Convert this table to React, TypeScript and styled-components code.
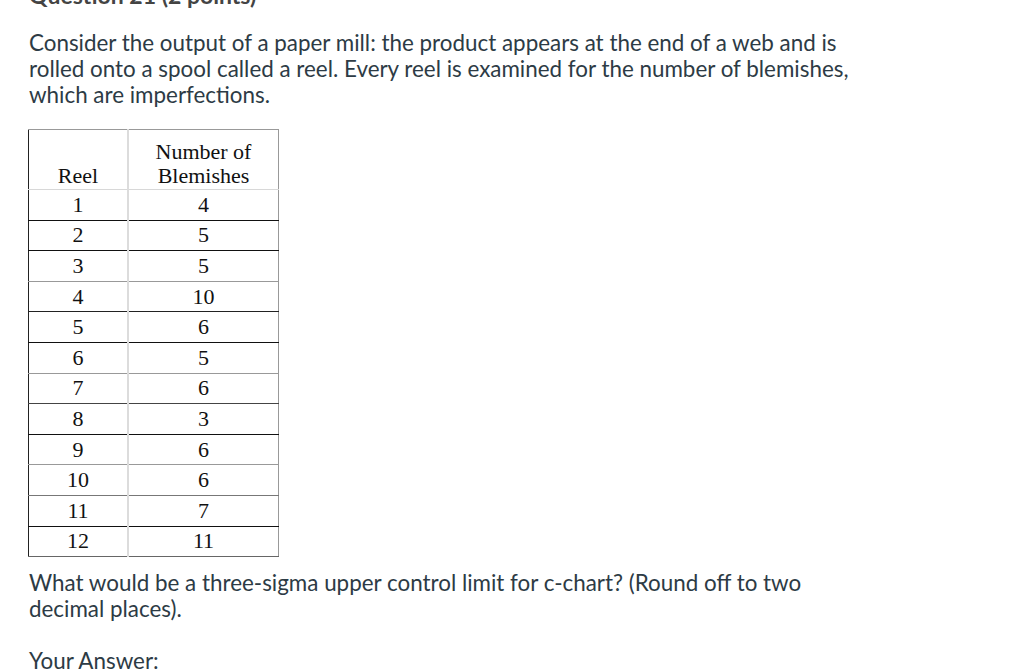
import React from "react";
import styled, { createGlobalStyle } from "styled-components";

const GlobalStyle = createGlobalStyle`
  html, body {
    margin: 0;
    padding: 0;
    background: #ffffff;
  }
  body {
    font-family: Lato, "Open Sans", sans-serif;
    color: #2d3b45;
    overflow: hidden;
  }
`;

const Page = styled.div`
  width: 1024px;
  height: 671px;
  overflow: hidden;
  padding-left: 29px;
  box-sizing: border-box;
`;

const Heading = styled.h2`
  margin: -17px 0 0 0;
  font-size: 23px;
  line-height: 24px;
  font-weight: 700;
  color: #444;
`;

const Text = styled.p`
  margin: 0;
  font-size: 22.4px;
  line-height: 26px;
  color: #2d3b45;
`;

const Intro = styled(Text)`
  margin-top: 23px;
  width: 860px;
`;

const Question = styled(Text)`
  margin-top: 13px;
  width: 800px;
`;

const Answer = styled(Text)`
  margin-top: 26px;
`;

const Table = styled.table`
  margin: 21px 0 0 -1px;
  border-collapse: collapse;
  font-family: "Liberation Serif", "Times New Roman", serif;
  font-size: 22px;
  color: #111;
  border-top: 1px solid #999;
  border-left: 1px solid #222;
  border-right: 1px solid #999;
`;

const HeadCell = styled.th`
  font-weight: 400;
  height: 58px;
  padding: 0 0 1px 0;
  vertical-align: bottom;
  line-height: 24px;
  border-bottom: 1px solid #d8d8d8;
  text-align: center;
`;

const HeadFirst = styled(HeadCell)`
  width: 98px;
  border-right: 2px solid #dcdcdc;
`;

const Row = styled.tr<{ $line: string }>`
  height: 30.6px;
  border-bottom: 1px solid ${p => p.$line};
`;

const Cell = styled.td<{ $first?: boolean }>`
  padding: 0;
  text-align: center;
  line-height: 24px;
  width: ${p => (p.$first ? "98px" : "149px")};
  border-right: ${p => (p.$first ? "2px solid #dcdcdc" : "none")};
`;

const rows: [number, number, string][] = [
  [1, 4, "#111"],
  [2, 5, "#111"],
  [3, 5, "#999"],
  [4, 10, "#222"],
  [5, 6, "#111"],
  [6, 5, "#999"],
  [7, 6, "#444"],
  [8, 3, "#111"],
  [9, 6, "#999"],
  [10, 6, "#777"],
  [11, 7, "#111"],
  [12, 11, "#666"],
];

export default function App() {
  return (
    <>
      <GlobalStyle />
      <Page>
        <Heading>Question 21 (2 points)</Heading>
        <Intro>
          Consider the output of a paper mill: the product appears at the end of a web and is
          rolled onto a spool called a reel. Every reel is examined for the number of blemishes,
          which are imperfections.
        </Intro>
        <Table>
          <thead>
            <tr>
              <HeadFirst>Reel</HeadFirst>
              <HeadCell>
                Number of
                <br />
                Blemishes
              </HeadCell>
            </tr>
          </thead>
          <tbody>
            {rows.map(([reel, count, line]) => (
              <Row key={reel} $line={line}>
                <Cell $first>{reel}</Cell>
                <Cell>{count}</Cell>
              </Row>
            ))}
          </tbody>
        </Table>
        <Question>
          What would be a three-sigma upper control limit for c-chart? (Round off to two decimal
          places).
        </Question>
        <Answer>Your Answer:</Answer>
      </Page>
    </>
  );
}
